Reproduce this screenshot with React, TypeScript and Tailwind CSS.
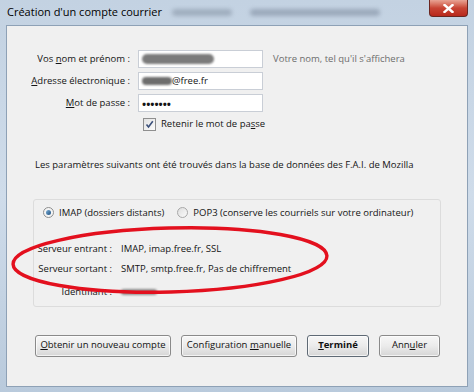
import React from "react";

const U = ({ children }: { children: React.ReactNode }) => <span className="underline underline-offset-1">{children}</span>;

function Btn({ children, bold, w }: { children: React.ReactNode; bold?: boolean; w: string }) {
  return (
    <div
      className={`${w} h-[22px] flex items-center justify-center whitespace-nowrap rounded-[3px] border ${bold ? "border-[#5f6a75] font-bold" : "border-[#8a8a8a]"} bg-gradient-to-b from-[#f7f7f7] via-[#ebebeb] to-[#d6d6d6] text-[#111] shadow-[inset_0_0_0_1px_rgba(255,255,255,0.7)]`}
    >
      <span>{children}</span>
    </div>
  );
}

function Input({ children }: { children?: React.ReactNode }) {
  return (
    <div className="w-[125px] h-[18px] bg-white border border-[#c9ced6] flex items-center pl-[3px] relative overflow-hidden whitespace-nowrap">
      {children}
    </div>
  );
}

export default function App() {
  return (
    <div
      className="w-[474px] h-[392px] relative overflow-hidden bg-gradient-to-b from-[#c3d2e2] via-[#cfdcea] to-[#b9cadc] text-[9.5px] text-[#141414] whitespace-nowrap"
      style={{ fontFamily: '"Open Sans", "Noto Sans", sans-serif' }}
    >
      {/* title bar */}
      <div className="h-[25px] flex items-center relative">
        <div className="pl-[7px] text-[11px] text-black">Création d'un compte courrier</div>
        <div className="ml-[10px] flex gap-[18px] blur-[2px] opacity-60">
          <div className="w-[60px] h-[7px] bg-[#8795a6] rounded-full" />
          <div className="w-[130px] h-[7px] bg-[#7f8da0] rounded-full" />
        </div>
        <div className="absolute right-[6px] top-0 w-[39px] h-[17px] rounded-b-[4px] border border-t-0 border-[#6b2620] bg-gradient-to-b from-[#e8a394] via-[#c84434] to-[#b8281c] flex items-center justify-center">
          <svg width="11" height="9" viewBox="0 0 11 9">
            <path d="M1.5 1 L9.5 8 M9.5 1 L1.5 8" stroke="#fff" strokeWidth="2.4" strokeLinecap="square" />
          </svg>
        </div>
      </div>

      {/* client area */}
      <div className="mx-[6px] h-[362px] bg-[#f0f0f0] border border-[#8ea1b6] relative">
        <div className="pt-[24px] flex flex-col gap-[4px]">
          <div className="flex items-center">
            <div className="w-[123px] text-right">Vos <U>n</U>om et prénom :</div>
            <div className="ml-[8px]">
              <Input>
                <div className="w-[72px] h-[10px] bg-[#7b7b7b] rounded-full blur-[1px]" />
              </Input>
            </div>
            <div className="ml-[10px] text-[#6d6d6d]">Votre nom, tel qu'il s'affichera</div>
          </div>
          <div className="flex items-center">
            <div className="w-[123px] text-right"><U>A</U>dresse électronique :</div>
            <div className="ml-[8px]">
              <Input>
                <div className="w-[30px] h-[8px] bg-[#6d6d6d] rounded-full blur-[1px]" />
                <span>@free.fr</span>
              </Input>
            </div>
          </div>
          <div className="flex items-center">
            <div className="w-[123px] text-right"><U>M</U>ot de passe :</div>
            <div className="ml-[8px]">
              <Input>
                <span className="text-[11px] font-bold leading-none">•••••••</span>
              </Input>
            </div>
          </div>
          <div className="flex items-center mt-[1px] pl-[136px] gap-[5px]">
            <div className="w-[13px] h-[13px] border border-[#8f8f8f] bg-gradient-to-br from-[#e2e2e2] to-[#fbfbfb] flex items-center justify-center">
              <svg width="9" height="9" viewBox="0 0 9 9">
                <path d="M1.5 4.5 L3.5 7 L7.8 1.2" fill="none" stroke="#3a4f7a" strokeWidth="1.6" />
              </svg>
            </div>
            <div>Retenir le mot de pa<U>s</U>se</div>
          </div>
        </div>

        <div className="mt-[27px] pl-[28px]">Les paramètres suivants ont été trouvés dans la base de données des F.A.I. de Mozilla</div>

        <div className="mt-[26px] ml-[26px] w-[408px] h-[108px] border border-[#dcdcdc] rounded-[3px] flex flex-col">
          <div className="flex items-center mt-[6px] pl-[9px]">
            <div className="w-[11px] h-[11px] rounded-full border border-[#8e8f8f] bg-[#f4f4f4] flex items-center justify-center">
              <div className="w-[5px] h-[5px] rounded-full bg-gradient-to-br from-[#7bb0d8] to-[#1f4f7e]" />
            </div>
            <div className="ml-[5px]">IMAP (dossiers distants)</div>
            <div className="ml-[13px] w-[11px] h-[11px] rounded-full border border-[#a8a8a8] bg-gradient-to-br from-[#dedede] to-[#fafafa]" />
            <div className="ml-[5px]">POP3 (conserve les courriels sur votre ordinateur)</div>
          </div>
          <div className="mt-[22px] flex flex-col gap-[6px]">
            <div className="flex items-center">
              <div className="w-[78px] text-right">Serveur entrant :</div>
              <div className="ml-[9px]">IMAP, imap.free.fr, SSL</div>
            </div>
            <div className="flex items-center">
              <div className="w-[78px] text-right">Serveur sortant :</div>
              <div className="ml-[9px]">SMTP, smtp.free.fr, Pas de chiffrement</div>
            </div>
            <div className="flex items-center mt-[3px]">
              <div className="w-[78px] text-right">Identifiant :</div>
              <div className="ml-[9px] w-[36px] h-[6px] bg-[#8a8a8a] rounded-full blur-[1px]" />
            </div>
          </div>
        </div>

        <div className="mt-[28px] ml-[28px] flex gap-[10px]">
          <Btn w="w-[136px]"><U>O</U>btenir un nouveau compte</Btn>
          <Btn w="w-[116px]">Configuration <U>m</U>anuelle</Btn>
          <Btn w="w-[62px]" bold><U>T</U>erminé</Btn>
          <Btn w="w-[61px]">Ann<U>u</U>ler</Btn>
        </div>

        {/* red annotation */}
        <svg className="absolute left-0 top-0 pointer-events-none" width="460" height="360">
          <ellipse cx="163" cy="234" rx="157" ry="32" fill="none" stroke="#e3101e" strokeWidth="3.4" transform="rotate(-1.5 163 234)" />
        </svg>
      </div>
    </div>
  );
}
